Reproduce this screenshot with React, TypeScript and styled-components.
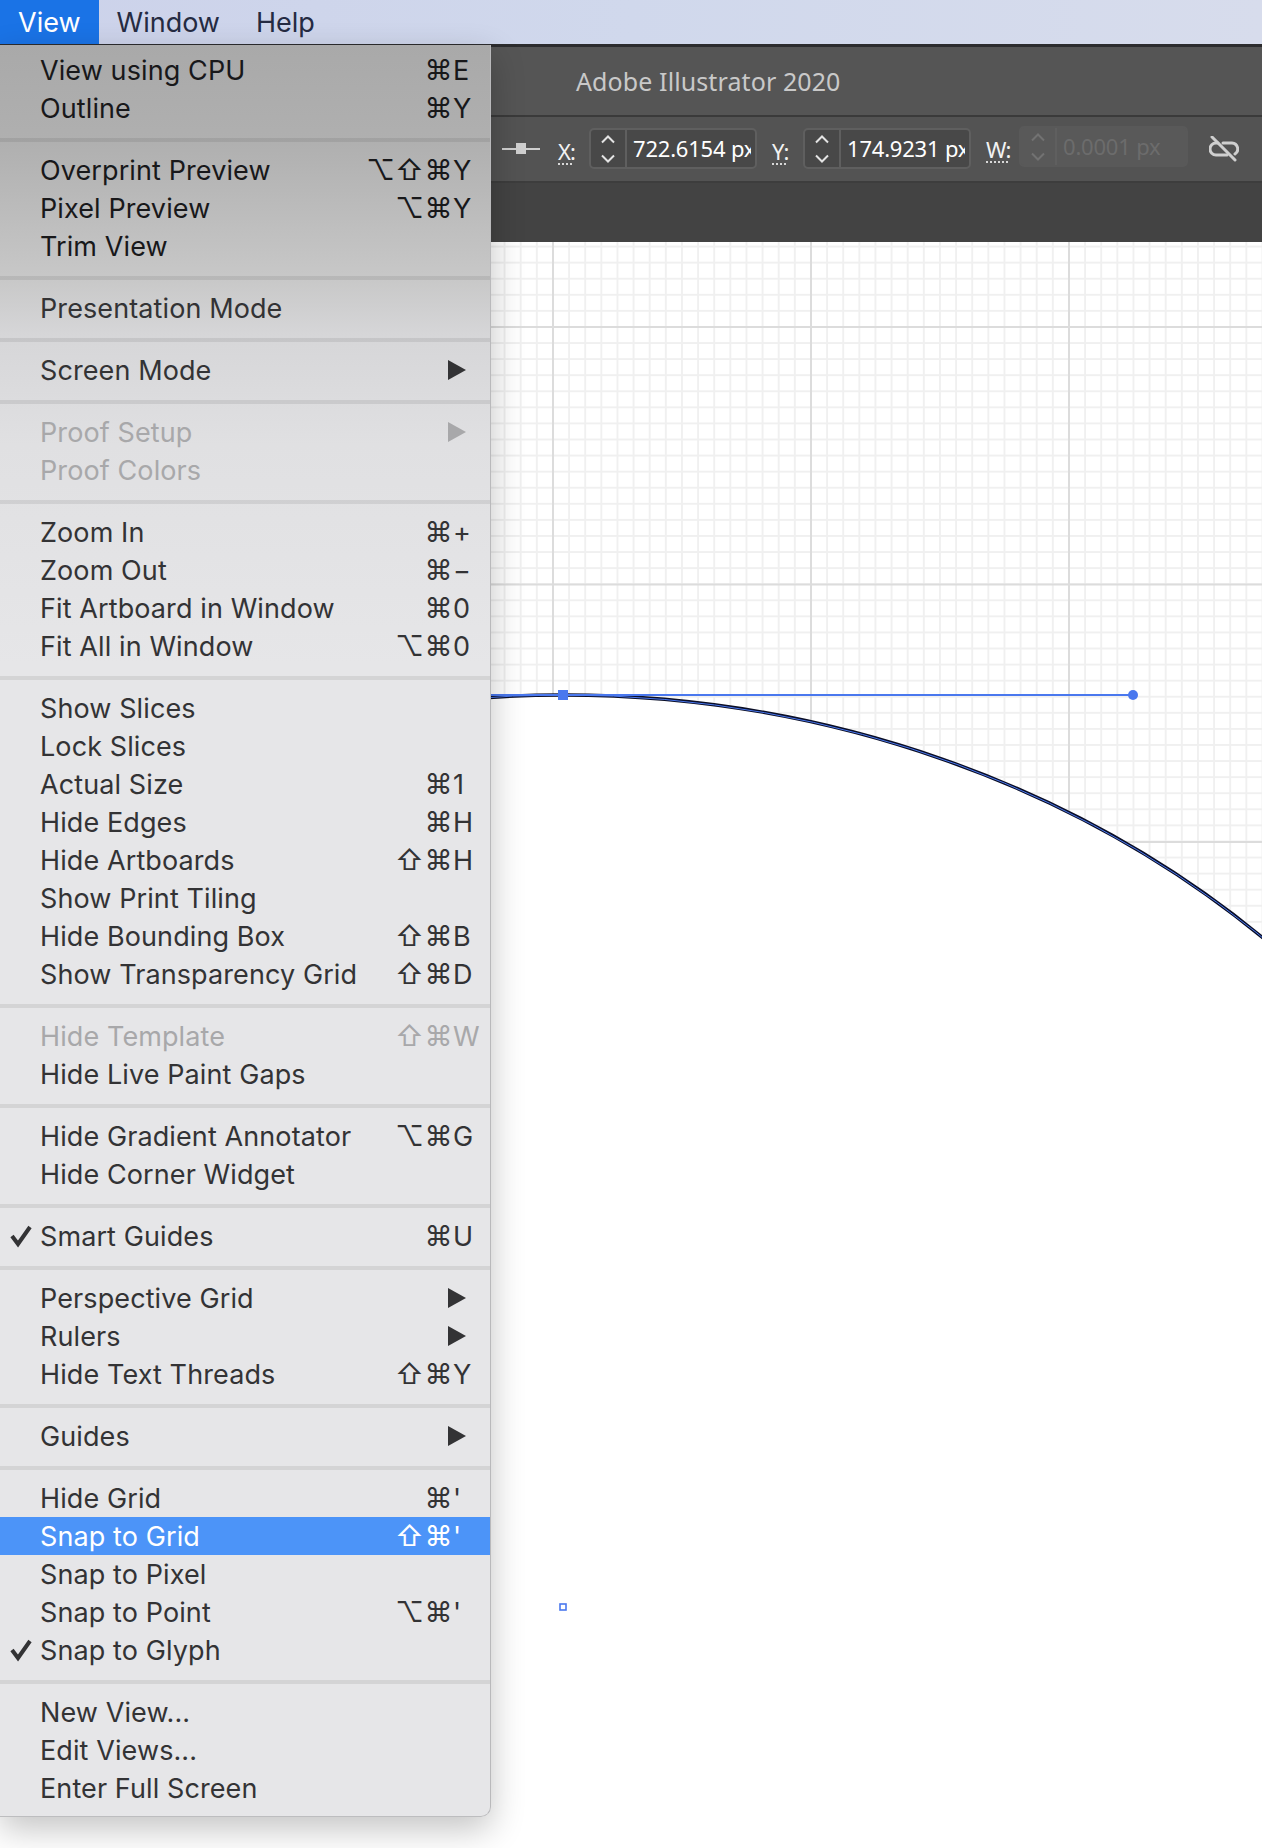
import React from 'react'
import styled, { createGlobalStyle } from 'styled-components'

const GlobalStyle = createGlobalStyle`
  html, body {
    margin: 0;
    padding: 0;
    background: #fff;
  }
  body {
    font-family: Inter, "Liberation Sans", sans-serif;
  }
`

const Page = styled.div`
  position: relative;
  width: 1262px;
  height: 1848px;
  overflow: hidden;
  display: flex;
  flex-direction: column;
`

const MenuBar = styled.div`
  height: 44px;
  flex: none;
  display: flex;
  background: linear-gradient(90deg, #ccd2ea 0%, #d0d8ec 50%, #d7dcec 100%);
  font-size: 27px;
  color: #252b42;
`

const MenuTitle = styled.div<{ $active?: boolean }>`
  display: flex;
  align-items: center;
  padding: 0 18px;
  background: ${p => (p.$active ? '#1a73e6' : 'transparent')};
  color: ${p => (p.$active ? '#fff' : 'inherit')};
`

const Workspace = styled.div`
  flex: 1;
  display: flex;
  flex-direction: column;
  min-height: 0;
  background: #fff;
`

const TitleBar = styled.div`
  height: 68px;
  flex: none;
  display: flex;
  align-items: center;
  padding-left: 576px;
  background: #555;
  border-top: 3px solid #2c2c2e;
  color: #c9c9c9;
  font-family: "Noto Sans", sans-serif;
  font-size: 25px;
  letter-spacing: 0.1px;
`

const ControlBar = styled.div`
  height: 63px;
  flex: none;
  display: flex;
  align-items: center;
  padding: 0 0 1px 502px;
  background: #535353;
  border-top: 2px solid #3a3a3a;
  border-bottom: 2px solid #3d3d3d;
  color: #f2f2f2;
  font-family: "Noto Sans", sans-serif;
`

const Band = styled.div`
  height: 59px;
  flex: none;
  background: #434343;
`

const Canvas = styled.div`
  position: relative;
  flex: 1;
  background-color: #fff;
  background-image:
    linear-gradient(90deg, #dcdcdc 2px, transparent 2px),
    linear-gradient(180deg, #dcdcdc 2px, transparent 2px),
    linear-gradient(90deg, #f0f0f0 2px, transparent 2px),
    linear-gradient(180deg, #f0f0f0 2px, transparent 2px);
  background-size: 258px 257.5px, 258px 257.5px, 16.125px 16.09px, 16.125px 16.09px;
  background-position: 552px 84px, 552px 84px, 552px 84px, 552px 84px;
`

const Drawing = styled.svg`
  position: absolute;
  left: 0;
  top: 0;
`

const AlignIcon = styled.svg`
  flex: none;
  margin-right: 18px;
`

const FieldLabel = styled.span<{ $raised?: boolean }>`
  width: ${p => (p.$raised ? '33px' : '31px')};
  flex: none;
  margin-top: ${p => (p.$raised ? '0' : '4px')};
  font-size: 22px;
  line-height: 26px;
  letter-spacing: -1px;
  text-decoration: underline dotted #d8d8d8 2px;
  text-underline-offset: 4px;
`

const Field = styled.div<{ $disabled?: boolean }>`
  width: ${p => (p.$disabled ? '169px' : '168px')};
  height: 41px;
  flex: none;
  box-sizing: border-box;
  display: flex;
  margin-right: 15px;
  border: 2px solid ${p => (p.$disabled ? '#595959' : '#5f5f5f')};
  border-radius: 5px;
  background: ${p => (p.$disabled ? '#595959' : '#484848')};
  color: ${p => (p.$disabled ? '#6c6c6c' : '#fff')};
  overflow: hidden;
  transform: translateY(${p => (p.$disabled ? '-2px' : '0')});
`

const Spinner = styled.div<{ $disabled?: boolean }>`
  width: 34px;
  flex: none;
  display: flex;
  align-items: center;
  justify-content: center;
  color: ${p => (p.$disabled ? '#727272' : '#e4e4e4')};
  border-right: 2px solid #5f5f5f;
`

const FieldValue = styled.div`
  flex: 1;
  margin: 0 4px 0 6px;
  font-size: 22px;
  line-height: 37px;
  letter-spacing: -0.2px;
  white-space: nowrap;
  overflow: hidden;
`

const UnlinkIcon = styled.svg`
  flex: none;
  margin-left: 6px;
  color: #cfcfcf;
`

const Menu = styled.div`
  position: absolute;
  left: 0;
  top: 45px;
  width: 491px;
  height: 1772px;
  box-sizing: border-box;
  padding: 6px 0 9px;
  border-right: 1px solid #b9b9bb;
  border-bottom: 1px solid #bdbdbf;
  border-radius: 0 0 10px 0;
  background: linear-gradient(180deg, #a9a9a9 0, #b0b0b0 100px, #c8c8c8 235px, #d6d6d8 290px, #e0e0e2 400px, #e6e6e8 620px);
  box-shadow: 0 12px 34px rgba(0, 0, 0, 0.24);
  font-size: 27px;
  letter-spacing: 0.1px;
  color: #333335;
`

const Separator = styled.div`
  height: 4px;
  margin: 11px 0 9px;
  background: rgba(0, 0, 0, 0.08);
`

const Row = styled.div<{ $active?: boolean; $disabled?: boolean; $dark?: boolean }>`
  position: relative;
  height: 38px;
  display: flex;
  align-items: center;
  justify-content: space-between;
  padding-left: 40px;
  background: ${p => (p.$active ? '#4c94f8' : 'transparent')};
  color: ${p => (p.$active ? '#fff' : p.$disabled ? '#a8a8aa' : p.$dark ? '#18181a' : 'inherit')};
`

const Shortcut = styled.div`
  display: flex;
  align-items: center;
  justify-content: flex-end;
`

const Mod = styled.span`
  width: 29px;
  text-align: center;
  font-size: 28px;
`

const KeyCell = styled.span`
  width: 37px;
`

const Arrow = styled.span`
  width: 0;
  height: 0;
  margin-right: 24px;
  border-left: 18px solid currentColor;
  border-top: 10px solid transparent;
  border-bottom: 10px solid transparent;
`

const Check = styled.svg`
  position: absolute;
  left: 9px;
  top: 7px;
`

type Item = {
  label: string
  mods?: string
  key_?: string
  arrow?: boolean
  check?: boolean
  disabled?: boolean
  active?: boolean
}

const groups: Item[][] = [
  [
    { label: 'View using CPU', mods: '⌘', key_: 'E' },
    { label: 'Outline', mods: '⌘', key_: 'Y' },
  ],
  [
    { label: 'Overprint Preview', mods: '⌥⇧⌘', key_: 'Y' },
    { label: 'Pixel Preview', mods: '⌥⌘', key_: 'Y' },
    { label: 'Trim View' },
  ],
  [{ label: 'Presentation Mode' }],
  [{ label: 'Screen Mode', arrow: true }],
  [
    { label: 'Proof Setup', arrow: true, disabled: true },
    { label: 'Proof Colors', disabled: true },
  ],
  [
    { label: 'Zoom In', mods: '⌘', key_: '+' },
    { label: 'Zoom Out', mods: '⌘', key_: '−' },
    { label: 'Fit Artboard in Window', mods: '⌘', key_: '0' },
    { label: 'Fit All in Window', mods: '⌥⌘', key_: '0' },
  ],
  [
    { label: 'Show Slices' },
    { label: 'Lock Slices' },
    { label: 'Actual Size', mods: '⌘', key_: '1' },
    { label: 'Hide Edges', mods: '⌘', key_: 'H' },
    { label: 'Hide Artboards', mods: '⇧⌘', key_: 'H' },
    { label: 'Show Print Tiling' },
    { label: 'Hide Bounding Box', mods: '⇧⌘', key_: 'B' },
    { label: 'Show Transparency Grid', mods: '⇧⌘', key_: 'D' },
  ],
  [
    { label: 'Hide Template', mods: '⇧⌘', key_: 'W', disabled: true },
    { label: 'Hide Live Paint Gaps' },
  ],
  [
    { label: 'Hide Gradient Annotator', mods: '⌥⌘', key_: 'G' },
    { label: 'Hide Corner Widget' },
  ],
  [{ label: 'Smart Guides', mods: '⌘', key_: 'U', check: true }],
  [
    { label: 'Perspective Grid', arrow: true },
    { label: 'Rulers', arrow: true },
    { label: 'Hide Text Threads', mods: '⇧⌘', key_: 'Y' },
  ],
  [{ label: 'Guides', arrow: true }],
  [
    { label: 'Hide Grid', mods: '⌘', key_: "'" },
    { label: 'Snap to Grid', mods: '⇧⌘', key_: "'", active: true },
    { label: 'Snap to Pixel' },
    { label: 'Snap to Point', mods: '⌥⌘', key_: "'" },
    { label: 'Snap to Glyph', check: true },
  ],
  [{ label: 'New View...' }, { label: 'Edit Views...' }, { label: 'Enter Full Screen' }],
]

const Chevrons = () => (
  <svg width="18" height="32" viewBox="0 0 18 32" fill="none" stroke="currentColor" strokeWidth="2">
    <path d="M3 9.5 9 3.5 15 9.5" />
    <path d="M3 22.5 9 28.5 15 22.5" />
  </svg>
)

const MenuRow: React.FC<{ item: Item; dark: boolean }> = ({ item, dark }) => (
  <Row $active={item.active} $disabled={item.disabled} $dark={dark}>
    {item.check && (
      <Check width="24" height="26" viewBox="0 0 24 26" fill="none" stroke="currentColor" strokeWidth="4">
        <path d="M3 12 9 20 21 3" />
      </Check>
    )}
    <span>{item.label}</span>
    {item.mods && (
      <Shortcut>
        {Array.from(item.mods).map(m => (
          <Mod key={m}>{m}</Mod>
        ))}
        <KeyCell>{item.key_}</KeyCell>
      </Shortcut>
    )}
    {item.arrow && <Arrow />}
  </Row>
)

const App: React.FC = () => (
  <Page>
    <GlobalStyle />
    <MenuBar>
      <MenuTitle $active>View</MenuTitle>
      <MenuTitle>Window</MenuTitle>
      <MenuTitle>Help</MenuTitle>
    </MenuBar>
    <Workspace>
      <TitleBar>Adobe Illustrator 2020</TitleBar>
      <ControlBar>
        <AlignIcon width="38" height="12" viewBox="0 0 38 12" fill="#cfcfcf">
          <rect y="5" width="38" height="2" />
          <rect x="14" width="10" height="11" />
        </AlignIcon>
        <FieldLabel>X:</FieldLabel>
        <Field>
          <Spinner>
            <Chevrons />
          </Spinner>
          <FieldValue>722.6154 px</FieldValue>
        </Field>
        <FieldLabel>Y:</FieldLabel>
        <Field>
          <Spinner>
            <Chevrons />
          </Spinner>
          <FieldValue>174.9231 px</FieldValue>
        </Field>
        <FieldLabel $raised>W:</FieldLabel>
        <Field $disabled>
          <Spinner $disabled>
            <Chevrons />
          </Spinner>
          <FieldValue>0.0001 px</FieldValue>
        </Field>
        <UnlinkIcon width="30" height="26" viewBox="0 0 30 26" fill="none" stroke="currentColor" strokeWidth="3" strokeLinecap="round">
          <path d="M3 1 26 24" />
          <path d="M9 7H7a6 6 0 0 0 0 12h11" />
          <path d="M14 7h9a6 6 0 0 1 3 11" />
        </UnlinkIcon>
      </ControlBar>
      <Band />
      <Canvas>
        <Drawing width="1262" height="1606" viewBox="0 242 1262 1606">
          <ellipse cx="563" cy="1611" rx="1032" ry="916" fill="#fff" stroke="#0a0e26" strokeWidth="3.4" />
          <ellipse cx="563" cy="1611" rx="1032" ry="916" fill="none" stroke="#4a78ee" strokeWidth="1" />
          <path d="M490 695H1133" stroke="#4a78ee" strokeWidth="2" />
          <rect x="558" y="690" width="10" height="10" fill="#4a78ee" />
          <circle cx="1133" cy="695" r="5" fill="#4a78ee" />
          <rect x="560" y="1604" width="6" height="6" fill="#fff" stroke="#4a78ee" strokeWidth="1.6" />
        </Drawing>
      </Canvas>
    </Workspace>
    <Menu>
      {groups.map((group, i) => (
        <React.Fragment key={i}>
          {i > 0 && <Separator />}
          {group.map(item => (
            <MenuRow key={item.label} item={item} dark={i < 2} />
          ))}
        </React.Fragment>
      ))}
    </Menu>
  </Page>
)

export default App
